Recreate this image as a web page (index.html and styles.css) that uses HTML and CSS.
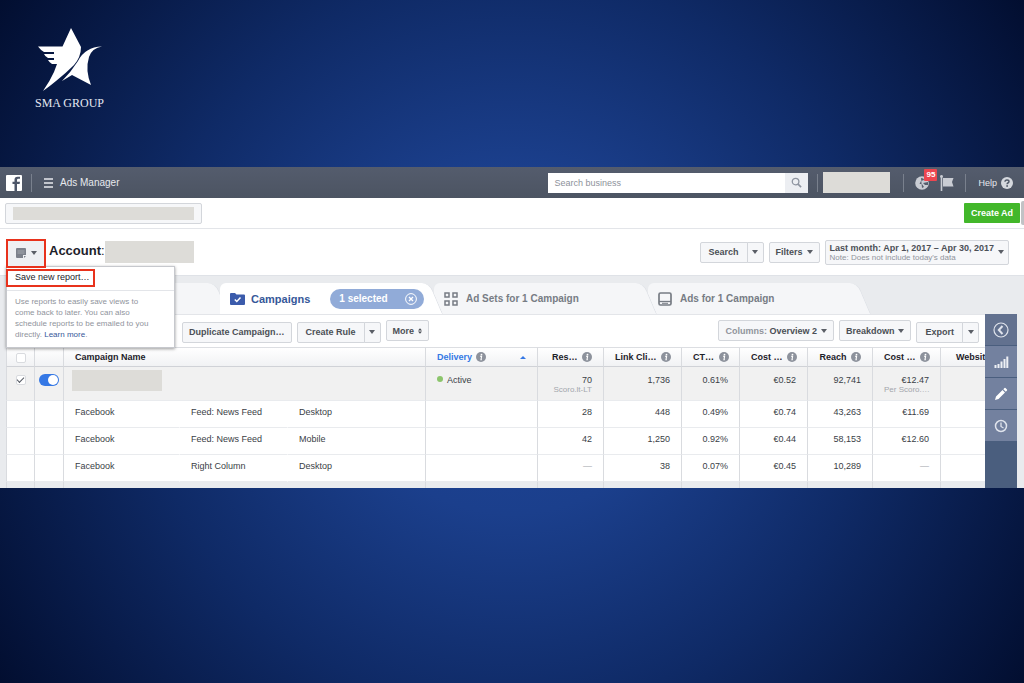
FILE: index.html
```html
<!DOCTYPE html>
<html lang="en">
<head>
<meta charset="utf-8">
<meta name="viewport" content="width=device-width, initial-scale=1">
<title>Ads Manager</title>
<link rel="stylesheet" href="styles.css">
</head>
<body>
<svg class="defs" aria-hidden="true">
  <symbol id="info" viewBox="0 0 10 10"><circle cx="5" cy="5" r="5" fill="#8d929c"/><circle cx="5.5" cy="2.6" r="0.9" fill="#fff"/><path d="M4 4.2h1.6L5 7.6h.8" fill="none" stroke="#fff" stroke-width="1.1"/></symbol>
</svg>

<header class="brand">
  <svg class="brand-mark" viewBox="0 0 64 64" fill="#fff" aria-hidden="true">
    <path d="M33 0L43 19Q43 29 36 37Q28 45 18 53Q12 58 5 63Q12 53 16 44L19 36H14Q11 34 10 32H16V30H10Q7 28.500 6 26H16V24H6Q3 22.500 0 18.500H24.500Z"/>
    <path d="M64 18.500Q54 20 51 29Q47 42 53 57L34 47L24 53Q33 44 40 33Q47 19 64 18.500Z"/>
  </svg>
  <span class="brand-name">SMA GROUP</span>
</header>

<main class="app">
  <nav class="topbar">
    <a class="fb" href="#" aria-label="Facebook">
      <svg viewBox="0 0 16 16"><rect width="16" height="16" rx="1" fill="#fff"/><path d="M14 3.800H12.300Q11 3.800 11 5V6.800H14L13.600 9.100H11V16H8.500V9.100H6.500V6.800H8.500V4.800Q8.500 1.800 11.500 1.800H14Z" fill="#4d5669"/></svg>
    </a>
    <span class="rule"></span>
    <button class="menu-button" type="button">
      <svg viewBox="0 0 9 10" aria-hidden="true"><path d="M0 1h9M0 5h9M0 9h9" stroke="#e7e9ee" stroke-width="1.500"/></svg>
      Ads Manager
    </button>
    <form class="search">
      <input type="text" placeholder="Search business" aria-label="Search business">
      <button type="button" aria-label="Search"><svg viewBox="0 0 12 12" aria-hidden="true"><circle cx="5" cy="5" r="3.600" fill="none" stroke="#8e94a0" stroke-width="1.400"/><path d="M7.700 7.700L11 11" stroke="#8e94a0" stroke-width="1.800"/></svg></button>
    </form>
    <span class="rule"></span>
    <span class="redacted user"></span>
    <span class="rule wide"></span>
    <button class="icon-button notify" type="button" aria-label="Notifications">
      <svg viewBox="0 0 14 14" aria-hidden="true"><circle cx="7" cy="7" r="6.800" fill="#c9ccd3"/><path d="M6 2Q9 2 9 4L6 5L4.500 8L7 8L9 11L7 12M8 7L13 6L13 9L10 9Z" fill="#575f6e"/></svg>
      <span class="badge">95</span>
    </button>
    <button class="icon-button flag" type="button" aria-label="Pages">
      <svg viewBox="0 0 14 16" aria-hidden="true"><path d="M1.500 1V16" stroke="#c9ccd3" stroke-width="1.600"/><circle cx="1.500" cy="1.500" r="1.400" fill="#c9ccd3"/><path d="M3 3H13.500L12 7L13.500 11.500H3Z" fill="#c9ccd3"/></svg>
    </button>
    <span class="rule"></span>
    <a class="help" href="#">Help
      <svg viewBox="0 0 12 12" aria-hidden="true"><circle cx="6" cy="6" r="6" fill="#d5d8de"/><path d="M4 4.800Q4 3 6 3T8 4.700Q8 5.500 6.900 6Q6.100 6.400 6.100 7.300" fill="none" stroke="#505867" stroke-width="1.400"/><circle cx="6.100" cy="9" r=".9" fill="#505867"/></svg>
    </a>
  </nav>

  <section class="account-bar">
    <button class="account-picker" type="button" aria-label="Choose account"><span class="redacted"></span></button>
    <button class="create" type="button">Create Ad</button>
    <span class="scroll-thumb"></span>
  </section>

  <section class="heading">
    <div class="report">
      <button class="report-button" type="button" aria-label="Reports">
        <svg viewBox="0 0 10 10" aria-hidden="true"><path d="M1 0H9Q10 0 10 1V7H7V10H1Q0 10 0 9V1Q0 0 1 0Z" fill="#7c818b"/><path d="M8 8h2L8 10Z" fill="#7c818b"/><path d="M1.500 3H8.500M1.500 5H8.500" stroke="#b4b8bf" stroke-width=".7"/></svg>
        <span class="caret"></span>
      </button>
      <div class="report-menu">
        <button class="save" type="button">Save new report…</button>
        <p>Use reports to easily save views to come back to later. You can also schedule reports to be emailed to you directly. <a href="#">Learn more</a>.</p>
      </div>
    </div>
    <h1><b>Account</b>:</h1>
    <span class="redacted account-name"></span>
    <div class="filters">
      <div class="split"><button class="btn" type="button">Search</button><button class="btn more" type="button" aria-label="Search options"><span class="caret"></span></button></div>
      <button class="btn" type="button">Filters <span class="caret"></span></button>
      <button class="btn date" type="button">
        <span class="range"><b>Last month: Apr 1, 2017 – Apr 30, 2017</b><small>Note: Does not include today's data</small></span>
        <span class="caret"></span>
      </button>
    </div>
  </section>

  <div class="tabs">
    <button class="tab first" type="button" aria-label="Account overview"></button>
    <div class="tab active">
      <svg viewBox="0 0 15 12" aria-hidden="true"><path d="M0 1Q0 0 1 0H5L6.500 1.500H14Q15 1.500 15 2.500V11Q15 12 14 12H1Q0 12 0 11Z" fill="#3b5bab"/><path d="M4.800 6.500L6.800 8.500L10.500 4.500" fill="none" stroke="#fff" stroke-width="1.500"/></svg>
      <a href="#">Campaigns</a>
      <span class="pill">1 selected
        <button type="button" aria-label="Clear selection"><svg viewBox="0 0 12 12" aria-hidden="true"><circle cx="6" cy="6" r="5.400" fill="none" stroke="#fff"/><path d="M4 4L8 8M8 4L4 8" stroke="#fff" stroke-width="1.300"/></svg></button>
      </span>
    </div>
    <button class="tab sets" type="button">
      <svg viewBox="0 0 14 14" aria-hidden="true" fill="none" stroke="#777c84" stroke-width="1.500"><path d="M1 1h4v4H1ZM9 1h4v4H9ZM1 9h4v4H1ZM9 9h4v4H9Z"/></svg>
      Ad Sets for 1 Campaign
    </button>
    <button class="tab ads" type="button">
      <svg viewBox="0 0 14 14" aria-hidden="true"><rect x="1" y="1" width="12" height="12" rx="1.500" fill="none" stroke="#777c84" stroke-width="1.700"/><path d="M1 9.500H13" stroke="#777c84" stroke-width="1.300"/><path d="M4 11.300H10" stroke="#777c84"/></svg>
      Ads for 1 Campaign
    </button>
  </div>

  <div class="workspace">
    <section class="panel">
      <div class="toolbar">
        <button class="btn" type="button">Duplicate Campaign…</button>
        <div class="split"><button class="btn" type="button">Create Rule</button><button class="btn more" type="button" aria-label="Rule options"><span class="caret"></span></button></div>
        <button class="btn raised" type="button">More <svg class="updown" viewBox="0 0 5 7" aria-hidden="true"><path d="M2.500 0L5 3H0ZM2.500 7L5 4H0Z" fill="#4b4f56"/></svg></button>
        <button class="btn raised columns" type="button"><span><span class="muted">Columns:</span> Overview 2</span> <span class="caret"></span></button>
        <button class="btn raised" type="button">Breakdown <span class="caret"></span></button>
        <div class="split"><button class="btn" type="button">Export</button><button class="btn more" type="button" aria-label="Export options"><span class="caret"></span></button></div>
      </div>
      <table>
        <colgroup><col class="c-check"><col class="c-toggle"><col class="c-name"><col class="c-place"><col><col class="c-delivery"><col class="c-res"><col class="c-link"><col class="c-ctr"><col class="c-cost"><col class="c-reach"><col class="c-cost"><col class="c-web"></colgroup>
        <thead>
          <tr>
            <th class="mid"><input class="tick" type="checkbox" aria-label="Select all"></th><th></th>
            <th colspan="3" class="left">Campaign Name</th>
            <th class="left sorted"><div class="cell">Delivery <svg><use href="#info"/></svg><span class="sort"></span></div></th>
            <th>Res… <svg><use href="#info"/></svg></th>
            <th>Link Cli… <svg><use href="#info"/></svg></th>
            <th>CT… <svg><use href="#info"/></svg></th>
            <th>Cost … <svg><use href="#info"/></svg></th>
            <th>Reach <svg><use href="#info"/></svg></th>
            <th>Cost … <svg><use href="#info"/></svg></th>
            <th class="web">Websit</th>
          </tr>
        </thead>
        <tbody>
          <tr class="selected">
            <td class="mid"><input class="tick" type="checkbox" checked aria-label="Select campaign"></td>
            <td class="mid"><input class="switch" type="checkbox" role="switch" checked aria-label="Campaign on"></td>
            <td colspan="3" class="left campaign"><span class="redacted"></span></td>
            <td class="left"><span class="dot"></span>Active</td>
            <td>70<small>Scoro.lt-LT</small></td><td>1,736</td><td>0.61%</td><td>€0.52</td><td>92,741</td><td>€12.47<small>Per Scoro.…</small></td><td></td>
          </tr>
          <tr><td></td><td></td><td class="left open">Facebook</td><td class="left open">Feed: News Feed</td><td class="left">Desktop</td><td></td><td>28</td><td>448</td><td>0.49%</td><td>€0.74</td><td>43,263</td><td>€11.69</td><td></td></tr>
          <tr><td></td><td></td><td class="left open">Facebook</td><td class="left open">Feed: News Feed</td><td class="left">Mobile</td><td></td><td>42</td><td>1,250</td><td>0.92%</td><td>€0.44</td><td>58,153</td><td>€12.60</td><td></td></tr>
          <tr><td></td><td></td><td class="left open">Facebook</td><td class="left open">Right Column</td><td class="left">Desktop</td><td></td><td class="none">—</td><td>38</td><td>0.07%</td><td>€0.45</td><td>10,289</td><td class="none">—</td><td></td></tr>
        </tbody>
        <tfoot><tr><td></td><td></td><td colspan="3"></td><td></td><td></td><td></td><td></td><td></td><td></td><td></td><td></td></tr></tfoot>
      </table>
    </section>
    <aside class="rail">
      <button class="back" type="button" aria-label="Expand"><svg viewBox="0 0 16 16" aria-hidden="true" fill="none" stroke="#dfe3ec"><circle cx="8" cy="8" r="7" stroke-width="1.200"/><path d="M9.500 4L5.800 8L9.500 12" stroke-width="2"/></svg></button>
      <button type="button" aria-label="Charts"><svg viewBox="0 0 16 16" aria-hidden="true"><path d="M2.500 14V11M5.500 14V10M8.500 14V7.500M11.500 14V5M14.300 14V2.500" stroke="#eef0f5" stroke-width="2"/></svg></button>
      <button type="button" aria-label="Edit"><svg viewBox="0 0 16 16" aria-hidden="true" fill="#fff"><path d="M2 14L3 10.500L9.500 4L12 6.500L5.500 13ZM10.300 3.200L11.500 2Q12 1.700 12.500 2L14 3.500Q14.300 4 14 4.500L12.800 5.700Z"/></svg></button>
      <button type="button" aria-label="History"><svg viewBox="0 0 16 16" aria-hidden="true" fill="none" stroke="#dfe3ec"><circle cx="8" cy="8" r="5.500" stroke-width="1.500"/><path d="M8 4.500V8.500L10.500 10" stroke-width="1.300"/></svg></button>
    </aside>
  </div>
</main>
</body>
</html>
```
FILE: styles.css
```css
* { box-sizing: border-box; }

body {
  margin: 0;
  min-height: 100vh;
  background: radial-gradient(circle farthest-corner at 50% 50%, #1e469a 0%, #1b3f8c 28%, #0f2a66 60%, #020e30 100%);
  font: 9px/12px "Liberation Sans", Arial, sans-serif;
  color: #3a3e46;
}

button, input { font: inherit; color: inherit; margin: 0; padding: 0; border: 0; background: none; }
button { display: inline-flex; align-items: center; justify-content: center; white-space: nowrap; }
a { color: #365899; text-decoration: none; }
svg { display: block; flex: none; }
.defs { width: 0; height: 0; position: absolute; }
.redacted { display: block; background: #dddcd8; }

/* Brand */
.brand {
  display: inline-flex;
  flex-direction: column;
  align-items: center;
  gap: 4px;
  height: 167px;
  padding: 28px 0 0 35px;
  vertical-align: top;
}
.brand-mark { width: 64px; height: 64px; }
.brand-name { font: 12px/14px "Liberation Serif", serif; color: #e4e8f2; }

/* Top bar */
.topbar {
  display: flex;
  align-items: center;
  height: 31px;
  padding: 0 11px 0 6px;
  background: linear-gradient(#545c6d, #4c5462);
  color: #e7e9ee;
}
.fb svg { width: 16px; height: 16px; }
.rule { width: 1px; height: 18px; margin: 0 5px 0 9px; background: #79808d; }
.rule.wide { margin: 0 11px 0 13px; }
.menu-button { gap: 7px; margin-left: 7px; font-size: 10px; }
.menu-button svg { width: 9px; height: 10px; }
.search { display: flex; flex: 0 0 260px; height: 20px; margin-left: auto; background: #fff; }
.search input { flex: 1; min-width: 0; padding: 0 6px; color: #4b4f56; }
.search input::placeholder { color: #8d929b; opacity: 1; }
.search button { width: 23px; background: #eceef2; }
.search button svg { width: 11px; height: 11px; }
.user { width: 67px; height: 21px; }
.icon-button { position: relative; }
.notify svg { width: 14px; height: 14px; }
.flag { margin-left: 11px; }
.flag svg { width: 14px; height: 16px; }
.flag + .rule { margin: 0 12px 0 11px; }
.badge {
  position: absolute;
  left: 9px;
  top: -7px;
  width: 13px;
  height: 12px;
  background: #ed4650;
  border-radius: 1px;
  color: #fff;
  font: bold 8px/12px "Liberation Sans", Arial, sans-serif;
}
.help { display: flex; align-items: center; gap: 4px; color: #e7e9ee; }
.help svg { width: 12px; height: 12px; }

/* Account bar */
.account-bar {
  display: flex;
  align-items: center;
  gap: 1px;
  height: 31px;
  padding-left: 5px;
  background: #fff;
  border-bottom: 1px solid #e3e5e9;
}
.account-picker { width: 197px; height: 21px; padding: 0 7px; background: #f6f7f9; border: 1px solid #d3d6db; border-radius: 2px; }
.account-picker .redacted { width: 100%; height: 13px; }
.create { width: 56px; height: 20px; margin-left: auto; background: #42b72a; border-radius: 1px; color: #fff; font-weight: bold; }
.scroll-thumb { width: 3px; height: 24px; background: #c1c2c5; border-radius: 2px 0 0 2px; }

/* Heading */
.heading { display: flex; align-items: center; height: 46px; padding: 0 15px 0 6px; background: #fff; }
.report { position: relative; z-index: 10; margin-top: 2px; }
.report-button { width: 40px; height: 29px; gap: 5px; background: #eef0f3; border: 2px solid #e8321c; }
.report-button svg { width: 10px; height: 10px; }
.report-menu {
  position: absolute;
  top: 27px;
  left: 0;
  z-index: -1;
  width: 169px;
  padding-top: 2px;
  background: #fff;
  border: 1px solid #c6c8cd;
  box-shadow: 0 1px 3px rgba(0, 0, 0, .4);
  font-size: 8px;
  line-height: 11px;
}
.save { height: 18px; margin-left: -1px; padding: 0 3px 0 7px; border: 2px solid #e8321c; font-size: 9px; color: #1d2129; }
.report-menu p { margin: 3px 0 0; padding: 5px 20px 7px 8px; border-top: 1px solid #e3e5e9; color: #90949c; }
h1 { margin: 0 0 2px 3px; font-size: 13px; line-height: 16px; font-weight: normal; color: #1d2129; }
.account-name { width: 89px; height: 22px; }
.filters { display: flex; align-items: center; gap: 5px; margin-left: auto; }

.btn {
  height: 21px;
  padding: 0 6px;
  gap: 4px;
  background: #f6f7f9;
  border: 1px solid #d3d6db;
  border-radius: 2px;
  color: #4b4f56;
  font-weight: bold;
}
.split { display: flex; }
.split .btn { padding: 0 8px; border-radius: 2px 0 0 2px; }
.split .btn.more { width: 17px; padding: 0; margin-left: -1px; border-radius: 0 2px 2px 0; }
.caret { width: 0; height: 0; border: 3px solid transparent; border-top: 4px solid #5a5e66; border-bottom: 0; }
.date { height: 25px; padding: 0 4px; gap: 4px; }
.range { display: flex; flex-direction: column; text-align: left; line-height: 10px; }
.range small { font-size: 8px; line-height: 9px; font-weight: normal; color: #90949c; }

/* Tabs */
.tabs { display: flex; height: 39px; padding: 7px 0 0 6px; background: #e9ebee; border-top: 1px solid #dfe2e7; }
.tab {
  --fill: #f5f6f8;
  position: relative;
  isolation: isolate;
  display: flex;
  align-items: center;
  justify-content: flex-start;
  gap: 8px;
  width: 223px;
  margin-left: -9px;
  padding-left: 10px;
  font-size: 10px;
  font-weight: bold;
  color: #777c84;
}
.tab::before, .tab::after { content: ""; position: absolute; z-index: -1; top: 0; bottom: 0; background: var(--fill); }
.tab::before { left: 0; right: 34px; border-radius: 6px 0 0 0; }
.tab::after { right: 0; width: 40px; border-radius: 0 8px 0 0; border-right: 1px solid #dfe2e7; transform: skewX(23deg); transform-origin: bottom right; }
.tab svg { width: 14px; height: 14px; }
.tab.first { z-index: 1; margin-left: 0; }
.tab.active { --fill: #fff; z-index: 3; gap: 6px; }
.tab.active > svg { width: 15px; height: 12px; }
.tab.active a { font-size: 11px; }
.tab.sets { z-index: 2; }
.pill { display: flex; align-items: center; justify-content: space-between; width: 94px; height: 20px; margin-left: 14px; padding: 0 7px 0 9px; border-radius: 10px; background: #91abd8; color: #fff; }
.pill svg { width: 12px; height: 12px; }

/* Workspace */
.workspace { display: flex; padding: 0 7px 0 6px; background: #e9ebee; }
.panel { flex: 1; min-width: 0; overflow: hidden; background: #fff; border-top: 1px solid #e3e5e9; }
.toolbar { display: flex; align-items: center; gap: 5px; height: 32px; padding: 2px 6px 0 176px; }
.raised { margin-bottom: 3px; }
.updown { width: 4px; height: 6px; }
.columns { margin-left: auto; }
.muted { color: #90949c; }

table { width: 100%; table-layout: fixed; border-collapse: separate; border-spacing: 0; }
.c-check { width: 29px; }
.c-toggle { width: 29px; }
.c-name { width: 116px; }
.c-place { width: 108px; }
.c-delivery { width: 112px; }
.c-res { width: 66px; }
.c-link { width: 78px; }
.c-ctr { width: 58px; }
.c-cost { width: 68px; }
.c-reach { width: 65px; }
.c-web { width: 44px; }
th, td { padding: 0 11px; border-right: 1px solid #d9dbdf; text-align: right; white-space: nowrap; overflow: hidden; }
th { height: 20px; background: linear-gradient(#fff, #f1f2f4); border-top: 1px solid #dcdee2; border-bottom: 1px solid #d0d2d7; color: #1d2129; }
th svg { display: inline-block; width: 10px; height: 10px; margin-left: 2px; vertical-align: -2px; }
td { height: 27px; padding-top: 5px; vertical-align: top; border-bottom: 1px solid #e9ebee; }
tr > :first-child { border-left: 1px solid #d9dbdf; }
tr > :last-child { border-right: 0; }
.left { text-align: left; }
.left.open { border-right-color: transparent; }
.mid { padding-left: 0; padding-right: 0; text-align: center; }
.web { padding: 0 0 0 15px; text-align: left; }
.cell { display: flex; align-items: center; gap: 2px; }
.sorted .cell { color: #3578e5; }
.sort { margin-left: auto; border: 3px solid transparent; border-bottom: 3px solid #3578e5; border-top: 0; }
.selected td { height: 34px; padding-top: 7px; background: #f1f1f1; }
.selected td.mid { padding-top: 6px; }
.selected td.campaign { padding-top: 3px; padding-left: 8px; }
.campaign .redacted { width: 90px; height: 21px; }
td small { display: block; font-size: 8px; line-height: 8px; color: #a3a6ac; }
.none { color: #a3a6ac; }
.dot { display: inline-block; width: 6px; height: 6px; margin-right: 4px; border-radius: 3px; background: #8cc56c; vertical-align: 1px; }
tfoot td { height: 6px; padding: 0; background: #e9ebee; border-bottom: 0; }

.tick { appearance: none; display: inline-grid; place-items: center; width: 10px; height: 10px; background: #fff; border: 1px solid #d9dbdf; border-radius: 2px; vertical-align: middle; }
.tick:checked::before { content: ""; width: 6px; height: 3px; border: solid #555a63; border-width: 0 0 1px 1px; transform: translateY(-1px) rotate(-45deg); }
.switch { appearance: none; display: inline-flex; justify-content: flex-end; width: 20px; height: 12px; padding: 1px; background: #3578e5; border-radius: 6px; vertical-align: middle; }
.switch::before { content: ""; width: 10px; height: 10px; border-radius: 5px; background: #fff; }

/* Right rail */
.rail { display: flex; flex-direction: column; flex: 0 0 32px; background: #4a5e7e; }
.rail button { height: 32px; background: #73819f; border-bottom: 1px solid #4a5e7e; }
.rail .back { background: #62718f; }
.rail svg { width: 16px; height: 16px; }
```
